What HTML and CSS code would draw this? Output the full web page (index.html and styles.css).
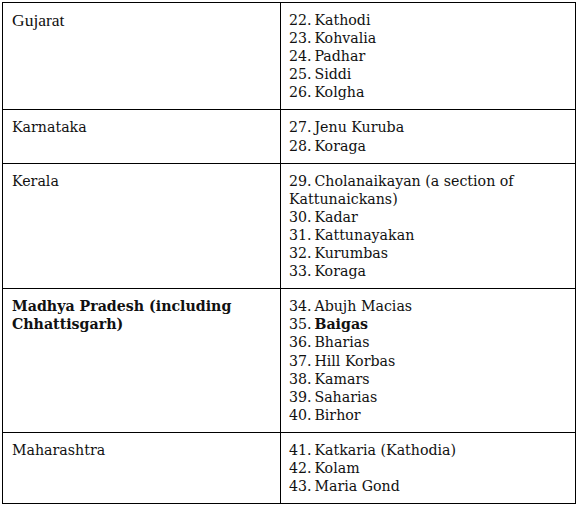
FILE: index.html
```html
<!DOCTYPE html>
<html>
<head>
<meta charset="utf-8">
<link rel="stylesheet" href="styles.css">
</head>
<body>
<table class="tribes">
  <colgroup><col class="c-state"><col class="c-list"></colgroup>
  <tbody>
    <tr>
      <td class="state state-times">Gujarat</td>
      <td><ol class="list" start="22"><li>Kathodi</li><li>Kohvalia</li><li>Padhar</li><li>Siddi</li><li>Kolgha</li></ol></td>
    </tr>
    <tr>
      <td class="state">Karnataka</td>
      <td><ol class="list" start="27"><li>Jenu Kuruba</li><li>Koraga</li></ol></td>
    </tr>
    <tr>
      <td class="state">Kerala</td>
      <td><ol class="list" start="29"><li>Cholanaikayan (a section of Kattunaickans)</li><li>Kadar</li><li>Kattunayakan</li><li>Kurumbas</li><li>Koraga</li></ol></td>
    </tr>
    <tr>
      <td class="state"><strong>Madhya Pradesh (including Chhattisgarh)</strong></td>
      <td><ol class="list" start="34"><li>Abujh Macias</li><li><strong>Baigas</strong></li><li>Bharias</li><li>Hill Korbas</li><li>Kamars</li><li>Saharias</li><li>Birhor</li></ol></td>
    </tr>
    <tr>
      <td class="state">Maharashtra</td>
      <td><ol class="list" start="41"><li>Katkaria (Kathodia)</li><li>Kolam</li><li>Maria Gond</li></ol></td>
    </tr>
  </tbody>
</table>
</body>
</html>
```
FILE: styles.css
```css
html, body {
  margin: 0;
  padding: 0;
  background: #fff;
}
body {
  padding: 2px 0 0 2px;
  font-family: "DejaVu Serif", "Liberation Serif", serif;
  font-size: 14.2px;
  line-height: 18.1px;
  color: #111;
}
.tribes {
  border-collapse: collapse;
  table-layout: fixed;
  width: 573px;
}
.c-state { width: 278px; }
.c-list { width: 295px; }
.tribes td {
  border: 1px solid #000;
  vertical-align: top;
  padding: 8px 8px 8px 8px;
}
.tribes td.state {
  padding-left: 9px;
}
.state-times {
  font-family: "Liberation Serif", serif;
  font-size: 17.5px;
}
.list {
  margin: 0;
  padding: 0;
  list-style-position: inside;
}
.list li { margin: 0; }
.list li::marker {
  content: counter(list-item) ".\2009";
}
strong { font-weight: bold; }
```
